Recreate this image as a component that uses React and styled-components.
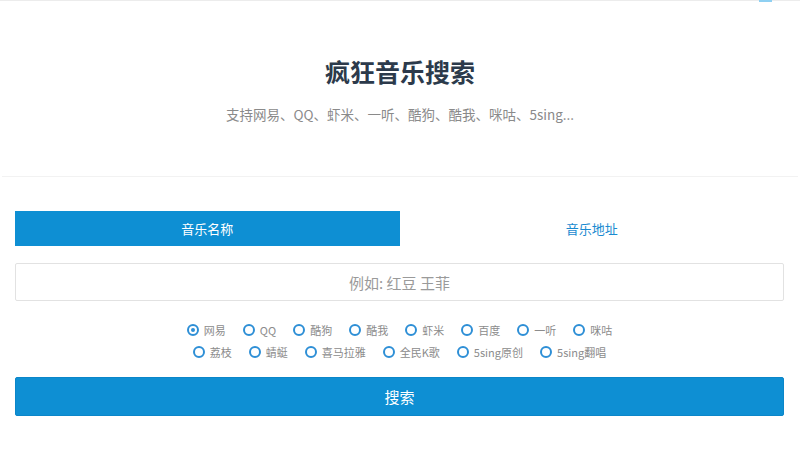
import React, { useState } from "react";
import styled, { createGlobalStyle } from "styled-components";

const GlobalStyle = createGlobalStyle`
  body {
    margin: 0;
    background: #ffffff;
    font-family: "Noto Sans CJK SC", "Noto Sans", "Liberation Sans", sans-serif;
  }
`;

const Page = styled.div`
  position: relative;
  border-top: 1px solid #ececec;
`;

const TopMark = styled.div`
  position: absolute;
  top: -1px;
  right: 28px;
  width: 13px;
  height: 2px;
  background: #8fd0f2;
`;

const Header = styled.header`
  height: 175px;
  margin: 0 2px;
  border-bottom: 1px solid #f2f2f2;
  display: flex;
  flex-direction: column;
  align-items: center;
`;

const Title = styled.h1`
  margin: 53px 0 0;
  font-size: 25px;
  line-height: 34px;
  font-weight: 700;
  color: #2c3a4b;
`;

const Subtitle = styled.p`
  margin: 17px 0 0;
  font-size: 13.5px;
  line-height: 18px;
  color: #8a8a8a;
`;

const Main = styled.main`
  padding: 34px 16px 0 15px;
`;

const Tabs = styled.div`
  display: flex;
  height: 35px;
`;

const Tab = styled.div`
  flex: 1;
  display: flex;
  align-items: center;
  justify-content: center;
  font-size: 13px;
  cursor: pointer;
  background: ${(props) => (props.$active ? "#0e8fd3" : "transparent")};
  color: ${(props) => (props.$active ? "#ffffff" : "#1a8ad0")};
`;

const Input = styled.input`
  display: block;
  box-sizing: border-box;
  width: 100%;
  height: 38px;
  margin-top: 17px;
  border: 1px solid #e2e2e2;
  border-radius: 2px;
  text-align: center;
  font-family: inherit;
  font-size: 15px;
  outline: none;
  &::placeholder {
    color: #9a9a9a;
  }
`;

const Sources = styled.div`
  margin-top: 18px;
  display: flex;
  flex-direction: column;
  align-items: center;
`;

const SourceRow = styled.div`
  display: flex;
  gap: 17px;
  height: 22px;
  align-items: center;
`;

const Option = styled.label`
  display: flex;
  align-items: center;
  gap: 5px;
  font-size: 11px;
  color: #8c8c8c;
  cursor: pointer;
  white-space: nowrap;
`;

const Circle = styled.span`
  box-sizing: border-box;
  width: 12px;
  height: 12px;
  border-radius: 50%;
  border: 2px solid #2e8fd6;
  display: flex;
  align-items: center;
  justify-content: center;
  &::after {
    content: "";
    width: 4px;
    height: 4px;
    border-radius: 50%;
    background: ${(props) => (props.$checked ? "#2e8fd6" : "transparent")};
  }
`;

const SearchButton = styled.button`
  display: block;
  width: 100%;
  height: 39px;
  margin-top: 14px;
  border: 1px solid #0b86c9;
  border-radius: 2px;
  background: #0e8fd3;
  color: #ffffff;
  font-family: inherit;
  font-size: 15px;
  cursor: pointer;
`;

// text kept as unicode escapes so the file stays plain ascii
const TITLE = "\u75af\u72c2\u97f3\u4e50\u641c\u7d22";
const SUBTITLE =
  "\u652f\u6301\u7f51\u6613\u3001QQ\u3001\u867e\u7c73\u3001\u4e00\u542c\u3001\u9177\u72d7\u3001\u9177\u6211\u3001\u54aa\u5495\u30015sing...";
const TAB_NAME = "\u97f3\u4e50\u540d\u79f0";
const TAB_URL = "\u97f3\u4e50\u5730\u5740";
const PLACEHOLDER = "\u4f8b\u5982: \u7ea2\u8c46 \u738b\u83f2";
const SEARCH = "\u641c\u7d22";

const rows = [
  [
    "\u7f51\u6613",
    "QQ",
    "\u9177\u72d7",
    "\u9177\u6211",
    "\u867e\u7c73",
    "\u767e\u5ea6",
    "\u4e00\u542c",
    "\u54aa\u5495",
  ],
  [
    "\u8354\u679d",
    "\u873b\u8713",
    "\u559c\u9a6c\u62c9\u96c5",
    "\u5168\u6c11K\u6b4c",
    "5sing\u539f\u521b",
    "5sing\u7ffb\u5531",
  ],
];

export default function App() {
  const [tab, setTab] = useState("name");
  const [source, setSource] = useState(rows[0][0]);

  return (
    <Page>
      <GlobalStyle />
      <TopMark />
      <Header>
        <Title>{TITLE}</Title>
        <Subtitle>{SUBTITLE}</Subtitle>
      </Header>
      <Main>
        <Tabs>
          <Tab $active={tab === "name"} onClick={() => setTab("name")}>
            {TAB_NAME}
          </Tab>
          <Tab $active={tab === "url"} onClick={() => setTab("url")}>
            {TAB_URL}
          </Tab>
        </Tabs>
        <Input placeholder={PLACEHOLDER} />
        <Sources>
          {rows.map((row, i) => (
            <SourceRow key={i}>
              {row.map((name) => (
                <Option key={name} onClick={() => setSource(name)}>
                  <Circle $checked={source === name} />
                  {name}
                </Option>
              ))}
            </SourceRow>
          ))}
        </Sources>
        <SearchButton>{SEARCH}</SearchButton>
      </Main>
    </Page>
  );
}
